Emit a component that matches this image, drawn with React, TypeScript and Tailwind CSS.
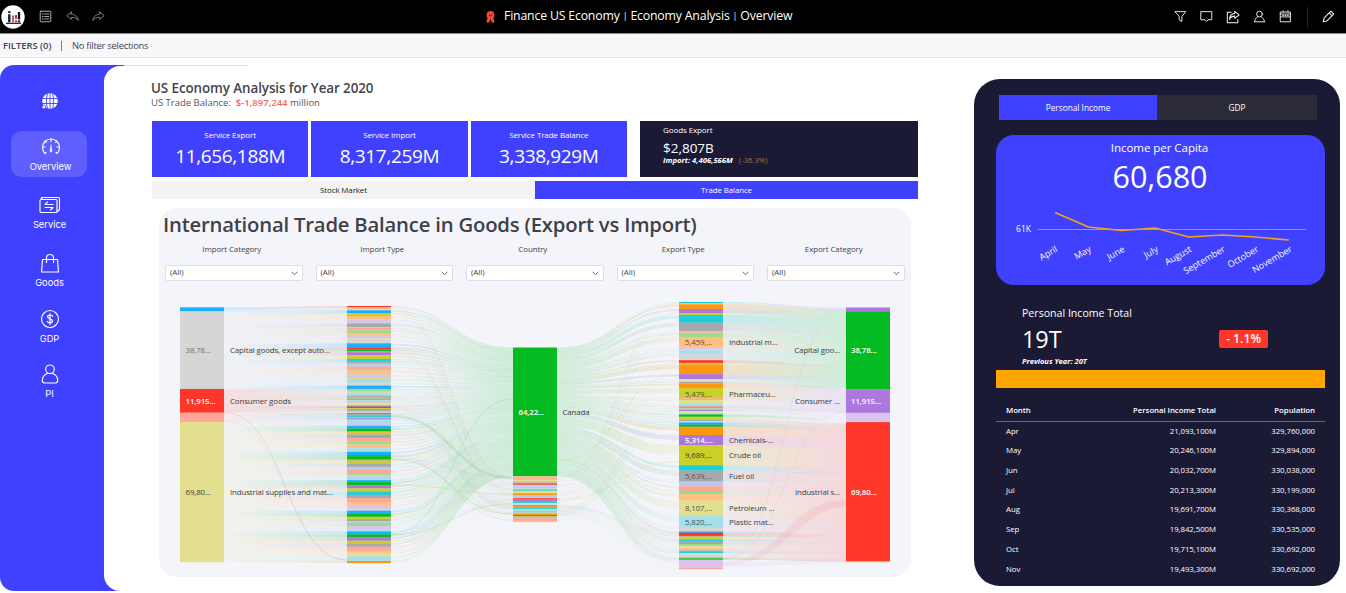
import React from 'react';

const C = {
  blue: '#1aaeff',
  gray: '#a8a8ab',
  silver: '#d6d6d6',
  red: '#ff372b',
  pink: '#ffa698',
  khaki: '#e2e08f',
  green: '#05bb22',
  purple: '#ad78dd',
  lavender: '#dac3ee',
  olive: '#cccf28',
  teal: '#1acfe0',
  orange: '#ff9610',
  peach: '#ffc080',
  sky: '#b4cdec',
  mint: '#96dd8c',
  aqua: '#a5e0ea',
};

type ColorName = keyof typeof C;
type Band = { y: number; h: number; color: ColorName };

// "color:weight" pairs, stacked between top and bottom
const parseBands = (top: number, bottom: number, spec: string): Band[] => {
  const parts = spec
    .trim()
    .split(/\s+/)
    .map((part) => part.split(':'));
  const sum = parts.reduce((acc, [, size]) => acc + Number(size), 0);
  let y = top;
  return parts.map(([color, size]) => {
    const h = (Number(size) / sum) * (bottom - top);
    const band = { y, h, color: color as ColorName };
    y += h;
    return band;
  });
};

const importCategory = parseBands(307.3, 562, 'blue:12 silver:233 red:71 pink:28 khaki:420');

const importType = parseBands(
  306,
  563,
  `red:4 peach:5 silver:4 blue:8 olive:9 peach:10 lavender:10 mint:4 gray:10 aqua:2 pink:7 mint:8 peach:8
  lavender:8 khaki:5 silver:10 blue:12 red:6 green:6 orange:3 purple:9 olive:11 teal:6 gray:8 sky:9 pink:9 mint:3
  peach:12 lavender:10 khaki:3 aqua:11 silver:9 blue:10 mint:7 peach:4 aqua:8 olive:4 purple:3 mint:3 gray:5 aqua:4
  pink:3 silver:5 khaki:4 blue:3 red:5 olive:3 purple:4 mint:5 silver:3 green:3 gray:5 teal:3 mint:4 purple:4
  aqua:10 lavender:9 blue:8 green:8 orange:4 olive:6 gray:11 pink:9 mint:10 peach:11 aqua:11 blue:10 red:3
  green:9 purple:4 olive:9 gray:10 sky:9 pink:12 mint:4 lavender:8 aqua:7 blue:6 green:10 purple:9 olive:9 teal:10
  gray:10 pink:12 peach:9 lavender:11 silver:6 blue:8 green:10 olive:7 gray:6 sky:5 mint:10 lavender:10 aqua:6
  blue:9 green:9 purple:10 olive:8 gray:10 pink:12 peach:6 khaki:11 aqua:14 orange:6`
);

const canada: Band = { y: 347.5, h: 128.8, color: 'green' };

const otherCountries = parseBands(
  476.3,
  522,
  `peach:6 pink:5 khaki:5 pink:4 gray:3 red:4 aqua:5 sky:5 silver:5 teal:4 khaki:8 orange:7 sky:5 peach:4
  red:4 purple:5 teal:6 khaki:5 aqua:3 red:3 orange:4 teal:4 aqua:6 mint:6 sky:3 orange:5 red:4 mint:6 pink:8 peach:4`
);

const exportType = parseBands(
  302,
  569,
  `teal:3 peach:4 orange:14 purple:12 olive:6 teal:23 gray:25 sky:4 pink:3 mint:11 peach:31 lavender:6 khaki:3 aqua:10
  silver:20 red:8 olive:5 orange:29 purple:15 silver:4 khaki:4 gray:5 orange:13 olive:32 pink:5 khaki:11 aqua:5
  pink:4 gray:5 mint:5 purple:3 khaki:5 aqua:5 green:7 olive:9 gray:4 silver:4 blue:7 green:6 orange:25 purple:31
  olive:60 teal:16 gray:33 sky:14 pink:14 mint:10 peach:19 khaki:47 aqua:35 silver:11 blue:4 red:7 green:4 pink:5
  olive:4 teal:5 gray:9 mint:6 khaki:6 peach:7 gray:4 teal:4 silver:12 olive:4 green:4 lavender:25 pink:3`
);

const exportCategory = parseBands(307.5, 562, 'purple:13 green:232 purple:71 lavender:28 red:418 olive:2');

const NODE = 44;
const COLS = { a: 180, b: 347, c: 513, d: 679, e: 846 };

const ribbon = (x0: number, y0: number, x1: number, y1: number) => {
  const m = (x0 + x1) / 2;
  return `M${x0} ${y0}C${m} ${y0} ${m} ${y1} ${x1} ${y1}`;
};

const bandAt = (bands: Band[], y: number) => bands.find((b) => y < b.y + b.h) ?? bands[bands.length - 1];

const Nodes = ({ x, bands }: { x: number; bands: Band[] }) => (
  <g>
    {bands.map((b, i) => (
      <rect key={i} x={x} y={b.y} width={NODE} height={b.h + 0.2} fill={C[b.color]} />
    ))}
  </g>
);

const Gradient = ({ id, x0, x1, from, to, a = 0.15, b = 0.15 }: {
  id: string; x0: number; x1: number; from: string; to: string; a?: number; b?: number;
}) => (
  <linearGradient id={id} gradientUnits="userSpaceOnUse" x1={x0} x2={x1} y1="0" y2="0">
    <stop offset="0" stopColor={from} stopOpacity={a} />
    <stop offset="1" stopColor={to} stopOpacity={b} />
  </linearGradient>
);

const names = Object.keys(C) as ColorName[];

const Links = () => (
  <g fill="none">
    {/* import category -> import type */}
    {importType.map((b, i) => {
      const y = b.y + b.h / 2;
      const y0 = 307.3 + ((y - 306) / 257) * 254.7;
      const from = bandAt(importCategory, y0);
      return (
        <g key={i} strokeWidth={b.h}>
          <path d={`${ribbon(224, y0, 347, y)}v.01`} stroke={`url(#ab-${from.color})`} />
          <path d={`${ribbon(224, y0, 347, y)}v.01`} stroke={`url(#bx-${b.color})`} />
        </g>
      );
    })}
    <path d={ribbon(224, 412.5, 347, 560)} stroke={C.red} strokeWidth="0.7" opacity="0.2" />
    <path d={ribbon(226, 421, 347, 560)} stroke={C.teal} strokeWidth="0.6" opacity="0.15" />
    {/* import type -> country */}
    {importType.map((b, i) => {
      const t = (b.y - 306 + b.h / 2) / 257;
      return (
        <g key={i}>
          <path
            d={ribbon(391, b.y + b.h * 0.3, 513, canada.y + t * canada.h)}
            strokeWidth={b.h * 0.55}
            stroke={`url(#bc-${b.color})`}
          />
          <path
            d={ribbon(391, b.y + b.h * 0.8, 513, 477 + ((t * 1.7) % 1) * 44)}
            strokeWidth={0.5}
            stroke={C[b.color]}
            opacity={0.12}
          />
        </g>
      );
    })}
    <path d={ribbon(391, 416, 513, 478)} stroke="#4fbf62" strokeWidth="2.5" opacity="0.17" />
    <path d={ribbon(391, 459, 513, 514)} stroke={C.green} opacity="0.18" />
    <path d={ribbon(391, 485, 513, 494)} stroke={C.olive} opacity="0.25" />
    <path d={ribbon(391, 534, 513, 399)} stroke={C.green} strokeWidth="0.7" opacity="0.2" />
    <path d={ribbon(391, 535, 513, 504)} stroke={C.green} opacity="0.14" />
    {/* country -> export type */}
    {exportType.map((b, i) => {
      const t = (b.y - 302 + b.h / 2) / 267;
      return (
        <g key={i}>
          <path
            d={ribbon(557, canada.y + t * canada.h, 679, b.y + b.h * 0.25)}
            strokeWidth={b.h * 0.48}
            stroke={`url(#cd-${b.color})`}
          />
          <path
            d={ribbon(557, 477 + ((t * 1.9) % 1) * 44, 679, b.y + b.h * 0.8)}
            strokeWidth={0.5}
            stroke={C[b.color]}
            opacity={0.12}
          />
        </g>
      );
    })}
    <path d={ribbon(557, 461, 679, 375)} stroke={C.olive} strokeWidth="0.8" opacity="0.25" />
    <path d={ribbon(557, 500, 679, 462)} stroke={C.olive} opacity="0.2" />
    {/* export type -> export category */}
    {exportType.slice(0, -2).map((b, i) => {
      const y = b.y + b.h / 2;
      const y1 = 307.5 + ((y - 302) / 257.7) * 254;
      const to = bandAt(exportCategory, y1);
      return (
        <g key={i} strokeWidth={b.h}>
          <path d={`${ribbon(723, y, 846, y1)}v.01`} stroke={`url(#de-${to.color})`} />
          <path d={`${ribbon(723, y, 846, y1)}v.01`} stroke={`url(#dx-${b.color})`} />
        </g>
      );
    })}
    <path
      d="M723 561C785 561 785 500 846 500V507C800 507 785 566 723 566z"
      fill="url(#dtail)"
    />
    <path d={ribbon(723, 565, 846, 561)} stroke={C.lavender} strokeWidth="4" opacity="0.16" />
    <path d={ribbon(723, 559, 846, 309)} stroke={C.gray} strokeWidth="0.6" opacity="0.25" />
    <path d={ribbon(723, 559, 846, 412)} stroke={C.gray} strokeWidth="0.6" opacity="0.25" />
  </g>
);

const sankeyLabels = [
  { x: 185.5, y: 353, text: '38,78...', fill: '#6d6d72' },
  { x: 185.5, y: 403.5, text: '11,915...', fill: '#ffffff', bold: true },
  { x: 185.5, y: 494.5, text: '69,80...', fill: '#3c3d42' },
  { x: 230, y: 353, text: 'Capital goods, except auto...' },
  { x: 230, y: 403.5, text: 'Consumer goods' },
  { x: 230, y: 494.5, text: 'Industrial supplies and mat...' },
  { x: 518.5, y: 415, text: '64,22...', fill: '#ffffff', bold: true },
  { x: 562.5, y: 415, text: 'Canada' },
  { x: 685, y: 345, text: '5,459,...', fill: '#55504a' },
  { x: 685, y: 396.5, text: '5,479,...', fill: '#55504a' },
  { x: 685, y: 443, text: '5,314,...', fill: '#ffffff', bold: true },
  { x: 685, y: 458, text: '9,689,...', fill: '#3c3d42' },
  { x: 685, y: 478.5, text: '5,639,...', fill: '#55555a' },
  { x: 685, y: 510.5, text: '8,107,...', fill: '#55504a' },
  { x: 685, y: 524.5, text: '5,820,...', fill: '#44505a' },
  { x: 729, y: 345, text: 'Industrial m...' },
  { x: 729, y: 396.5, text: 'Pharmaceu...' },
  { x: 729, y: 443, text: 'Chemicals-...' },
  { x: 729, y: 458, text: 'Crude oil' },
  { x: 729, y: 478.5, text: 'Fuel oil' },
  { x: 729, y: 510.5, text: 'Petroleum ...' },
  { x: 729, y: 524.5, text: 'Plastic mat...' },
  { x: 840, y: 353, text: 'Capital goo...', end: true },
  { x: 840, y: 403.5, text: 'Consumer ...', end: true },
  { x: 840, y: 494.5, text: 'Industrial s...', end: true },
  { x: 851, y: 353, text: '38,78...', fill: '#ffffff', bold: true },
  { x: 851, y: 403.5, text: '11,915...', fill: '#ffffff', bold: true },
  { x: 851, y: 494.5, text: '69,80...', fill: '#ffffff', bold: true },
];

const Sankey = () => (
  <svg className="block w-[752px] h-[282px]" viewBox="159 295 752 282">
    <defs>
      {names.map((n) => (
        <React.Fragment key={n}>
          <Gradient id={`ab-${n}`} x0={224} x1={347} from={C[n]} to={C[n]} a={0.13} b={0.03} />
          <Gradient id={`bx-${n}`} x0={224} x1={347} from={C[n]} to={C[n]} a={0} b={0.2} />
          <Gradient id={`bc-${n}`} x0={391} x1={513} from={C[n]} to={C.green} />
          <Gradient id={`cd-${n}`} x0={557} x1={679} from={C.green} to={C[n]} b={n === 'olive' ? 0.1 : 0.14} />
          <Gradient id={`de-${n}`} x0={723} x1={846} from={C[n]} to={C[n]} a={0.03} b={0.15} />
          <Gradient id={`dx-${n}`} x0={723} x1={846} from={C[n]} to={C[n]} a={0.2} b={0} />
        </React.Fragment>
      ))}
      <Gradient id="dtail" x0={723} x1={846} from={C.lavender} to={C.red} a={0.2} b={0.08} />
    </defs>
    <Links />
    <Nodes x={COLS.a} bands={importCategory} />
    <Nodes x={COLS.b} bands={importType} />
    <Nodes x={COLS.c} bands={[canada, ...otherCountries]} />
    <Nodes x={COLS.d} bands={exportType} />
    <Nodes x={COLS.e} bands={exportCategory} />
    {sankeyLabels.map((l, i) => (
      <text
        key={i}
        x={l.x}
        y={l.y}
        fontSize="7.9"
        letterSpacing="-0.12"
        fontWeight={l.bold ? 600 : 400}
        textAnchor={l.end ? 'end' : 'start'}
        fill={l.fill ?? '#3c3d43'}
      >
        {l.text}
      </text>
    ))}
  </svg>
);

const months = ['April', 'May', 'June', 'July', 'August', 'September', 'October', 'November'];
const incomeY = [212.5, 227, 230.5, 228, 237, 235, 237, 240];

const IncomeChart = () => (
  <svg className="block w-[329px] h-[85px]" viewBox="996 200 329 85">
    <text x="1031" y="232" fontSize="8.5" textAnchor="end" fill="#fff">61K</text>
    <line x1="1038" x2="1306" y1="229.5" y2="229.5" stroke="#8f8fff" />
    <polyline
      points={incomeY.map((y, i) => `${1055 + i * 33.4},${y}`).join(' ')}
      fill="none"
      stroke="#f5a21a"
      strokeWidth="1.7"
    />
    {months.map((m, i) => (
      <text
        key={m}
        fontSize="9"
        fill="#fff"
        textAnchor="end"
        transform={`translate(${1058.3 + i * 33.5} 251) rotate(-30)`}
      >
        {m}
      </text>
    ))}
  </svg>
);

const rows = [
  ['Apr', '21,093,100M', '329,760,000'],
  ['May', '20,246,100M', '329,894,000'],
  ['Jun', '20,032,700M', '330,038,000'],
  ['Jul', '20,213,300M', '330,199,000'],
  ['Aug', '19,691,700M', '330,368,000'],
  ['Sep', '19,842,500M', '330,535,000'],
  ['Oct', '19,715,100M', '330,692,000'],
  ['Nov', '19,493,300M', '330,692,000'],
];

const Icon = ({ className, viewBox = '0 0 16 16', children }: {
  className: string; viewBox?: string; children: React.ReactNode;
}) => (
  <svg className={className} viewBox={viewBox} fill="none" stroke="currentColor" strokeWidth="1.15" strokeLinejoin="round" strokeLinecap="round">
    {children}
  </svg>
);

const Header = () => (
  <header className="h-[33px] bg-black flex items-center text-white shrink-0">
    <div className="flex items-center w-[486px] pl-[1px]">
      <svg className="w-6 h-6" viewBox="0 0 24 24">
        <circle cx="12" cy="12" r="11.7" fill="#fff" />
        <path d="M5 18.300h15" stroke="#15152e" strokeWidth="1.2" />
        <path d="M8.300 6.200v1.800M8.300 9.200v8" stroke="#15152e" strokeWidth="2.4" />
        <path d="M12 10.500v6.700" stroke="#d43a35" strokeWidth="1.700" />
        <path d="M15 10v4M15 15.200v2" stroke="#8c2a3a" strokeWidth="1.700" />
        <path d="M18 7v7.500M18 15.500v1.700" stroke="#15152e" strokeWidth="2.4" />
      </svg>
      <Icon className="w-[13px] h-[13px] ml-[14px] text-[#b5b5bd]">
        <rect x="1.500" y="1.500" width="13" height="13" rx="1" />
        <path d="M4 5h1M7 5h5M4 8h1M7 8h5M4 11h1M7 11h5" />
      </Icon>
      <Icon className="w-[13px] h-[13px] ml-[14px] text-[#85858d]">
        <path d="M6.500 2.500 1 7l5.500 4.500V9c4 0 6.500 1 8.500 4-.5-5-4-7.500-8.500-8z" />
      </Icon>
      <Icon className="w-[13px] h-[13px] ml-[13px] text-[#85858d]">
        <path d="M9.500 2.500 15 7l-5.500 4.500V9c-4 0-6.500 1-8.500 4 .5-5 4-7.500 8.500-8z" />
      </Icon>
    </div>
    <div className="flex items-center w-[688px]">
      <div className="w-[18px]">
        <svg className="w-[9px] h-3" viewBox="0 0 9 12">
          <circle cx="4.500" cy="4" r="3.900" fill="#f44a35" />
          <path d="M1.500 7 .3 11.500H3L4.500 8 6 11.500h2.700L7.500 7z" fill="#f44a35" />
          <path d="M3 4l1.200 1.200L6.200 3" fill="none" stroke="#4a0d07" strokeWidth=".9" />
        </svg>
      </div>
      <h1 className="text-[12.3px] tracking-[-0.18px] whitespace-nowrap">
        Finance US Economy <span className="text-[9px] align-[1px]">|</span> Economy Analysis <span className="text-[9px] align-[1px]">|</span> Overview
      </h1>
    </div>
    <div className="flex items-center text-[#f2f2f6]">
      <Icon className="w-[13px] h-[13px]">
        <path d="M1.500 2h13L9.700 8v6L6.300 12V8z" />
      </Icon>
      <Icon className="w-[13px] h-[13px] ml-[13px]">
        <path d="M1.500 2h13v10H10l-2 2.200L6 12H1.500z" />
      </Icon>
      <Icon className="w-[14px] h-[14px] ml-[13px]">
        <path d="M6 2.500H1.500v12h12V11M10 1.500 15 5.500l-5 4V7C7 7 5.300 8 4 10.500 4.200 6.500 6.500 4.200 10 4z" />
      </Icon>
      <Icon className="w-[13px] h-[13px] ml-[13px]">
        <circle cx="8" cy="5" r="3.500" />
        <path d="M2 14.500c0-3 1.800-5 4-6.200M14 14.500c0-3-1.800-5-4-6.200M2 14.500h12" />
      </Icon>
      <Icon className="w-[13px] h-[13px] ml-[13px]">
        <path d="M2 2.500h12v12H2zM5 1v1.500M11 1v1.500M2 5h12M2 8.500h12M4.500 6.800h1M7.500 6.800h1M10.500 6.800h1" />
      </Icon>
      <div className="w-px h-5 bg-[#222228] ml-[15px]" />
      <Icon className="w-[13px] h-[13px] ml-[14px]">
        <path d="M11 1.500 14.500 5l-8.500 8.500L1.500 14.500 2.500 10zM9 3.500 12.500 7" strokeWidth="1.300" />
      </Icon>
    </div>
  </header>
);

const navItems = [
  {
    label: 'Overview',
    box: 'mt-[22px] h-[46px] pt-[6px]',
    icon: (
      <Icon className="w-5 h-5" viewBox="0 0 20 20">
        <path d="M4 16.500a8.500 8.500 0 1 1 12 0M4 16.500l1-1M16 16.500l-1-1M1.500 10H4M16 10h2.500M10 1.500v3M4 4l1.300 1.300M16 4l-1.300 1.300" />
        <path d="M10 8l1 6a1 1 0 0 1-2 0z" fill="currentColor" strokeWidth=".5" />
      </Icon>
    ),
  },
  {
    label: 'Service',
    box: 'mt-[16px] h-[43px] pt-[2px]',
    icon: (
      <Icon className="w-[21px] h-5" viewBox="0 0 21 20">
        <rect x="1" y="4.500" width="17" height="13" rx="1" />
        <path d="M2.500 2.500h17a1 1 0 0 1 1 1v11l-2 2M2 4l1.500-1.500M14 9.500H6L8.500 7M6 12.500h8L11.500 15" />
      </Icon>
    ),
  },
  {
    label: 'Goods',
    box: 'mt-[15px] h-[43px] pt-[2px]',
    icon: (
      <Icon className="w-5 h-5" viewBox="0 0 20 20">
        <path d="M2.500 6.500h15l1 12.500h-17zM6.500 9.500V5a3.500 3.500 0 0 1 7 0v4.500" />
      </Icon>
    ),
  },
  {
    label: 'GDP',
    box: 'mt-[13px] h-[43px] pt-[2px]',
    icon: (
      <Icon className="w-5 h-5" viewBox="0 0 20 20">
        <circle cx="10" cy="10" r="8.500" />
        <path d="M12.700 7.300C12 6 8 5.500 7.500 7.700c-.3 2.500 5.200 1.800 5 4.500-.2 2.300-4.200 2.300-5.200.3M10 4.800v10.400" strokeWidth="1.300" />
      </Icon>
    ),
  },
  {
    label: 'PI',
    box: 'mt-[12px] h-[43px] pt-[2px]',
    icon: (
      <Icon className="w-5 h-5" viewBox="0 0 20 20">
        <circle cx="10" cy="5.300" r="4.300" />
        <path d="M7.500 9.500c-3 1-5 3.500-5.200 6.500 0 2 .7 3 2.200 3h11c1.500 0 2.200-1 2.200-3-.2-3-2.200-5.500-5.200-6.500" />
      </Icon>
    ),
  },
];

const Sidebar = () => (
  <aside className="w-[124px] h-[526px] mt-[7px] bg-[#4040ff] rounded-l-[14px] shrink-0 flex flex-col text-white">
    <div className="w-[99px] flex flex-col items-center pt-[28px]">
      <svg className="w-4 h-4" viewBox="0 0 16 16">
        <circle cx="8" cy="8" r="7.800" fill="#fff" />
        <path d="M0 5.500h16M0 10.500h16M8 0v16M5.500.5C4 5 4 11 5.500 15.500M10.500.5C12 5 12 11 10.500 15.500" fill="none" stroke="#4040ff" strokeWidth=".9" />
        <circle cx="1.800" cy="14" r="1.800" fill="#fff" stroke="#4040ff" strokeWidth=".7" />
      </svg>
      {navItems.map((item) => (
        <div
          key={item.label}
          className={`w-[76px] flex flex-col items-center rounded-[11px] ${item.box} ${
            item.label === 'Overview' ? 'bg-[#5f5fff] pl-[3px] mr-px' : ''
          }`}
        >
          {item.icon}
          <span className="text-[9.3px] leading-3 mt-[4px] font-['Inter','Liberation_Sans',sans-serif]">{item.label}</span>
        </div>
      ))}
    </div>
  </aside>
);

const stats = [
  { label: 'Service Export', value: '11,656,188M' },
  { label: 'Service Import', value: '8,317,259M' },
  { label: 'Service Trade Balance', value: '3,338,929M' },
];

const filters = ['Import Category', 'Import Type', 'Country', 'Export Type', 'Export Category'];

const Overview = () => (
  <main className="-ml-[20px] pl-[47px] mt-[8px] h-[525px] w-[814px] shrink-0 bg-white rounded-l-[16px]">
    <div className="-mt-px -ml-[27px] w-[124px] h-px bg-[#dcdcff]" />
    <h2 className="text-[13.400px] leading-[18px] tracking-[-0.08px] font-semibold text-[#44454c] pt-[13px]">US Economy Analysis for Year 2020</h2>
    <p className="text-[9.500px] leading-[11px] text-[#55565c]">
      US Trade Balance:&nbsp; <span className="text-[#f0695c] font-semibold">$-1,897,244</span> million
    </p>
    <div className="flex mt-[13px] ml-px h-[56px] text-white">
      <div className="flex gap-[3px] w-[475px]">
        {stats.map((s) => (
          <div key={s.label} className="flex-1 bg-[#4040ff] flex flex-col items-center">
            <div className="text-[8px] leading-[12px] mt-[8px] tracking-[-0.1px]">{s.label}</div>
            <div className="text-[19px] leading-[26px] mt-[2px] tracking-[-0.35px]">{s.value}</div>
          </div>
        ))}
      </div>
      <div className="ml-[13px] w-[278px] bg-[#1b1a35] pl-[23px]">
        <div className="text-[8px] leading-[12px] mt-[3px] tracking-[-0.1px]">Goods Export</div>
        <div className="text-[13.500px] leading-[14px] mt-[5px]">$2,807B</div>
        <div className="text-[7.700px] leading-[8px] mt-px">
          <span className="italic font-bold">Import: 4,406,566M</span>
          <span className="ml-[6px] text-[#a8743f]">(<span className="text-[#ff372b]">-</span>36.3%)</span>
        </div>
      </div>
    </div>
    <div className="flex mt-[4px] ml-px h-[18px] text-[7.900px] tracking-[-0.1px] text-center leading-[18px] w-[766px]">
      <div className="flex-1 bg-[#f3f3f3] text-[#222]">Stock Market</div>
      <div className="flex-1 bg-[#4040ff] text-white">Trade Balance</div>
    </div>
    <section className="mt-[9px] ml-[8px] w-[752px] h-[369px] bg-[#f4f5fb] rounded-[18px] overflow-hidden text-[#404148]">
      <h3 className="pl-[4px] pt-[2px] text-[20.300px] leading-[28px] tracking-[-0.2px] font-semibold whitespace-nowrap">
        International Trade Balance in Goods (Export vs Import)
      </h3>
      <div className="flex gap-[13px] pl-[6px] mt-[5px] h-[52px]">
        {filters.map((f) => (
          <div key={f} className="w-[137.500px]">
            <div className="text-[7.900px] leading-[12px] tracking-[-0.08px] text-center pr-[4px]">{f}</div>
            <div className="mt-[10px] h-4 bg-white border border-[#dedfe4] rounded-[2px] flex items-center justify-between px-[4px]">
              <span className="text-[7.900px] leading-none">(All)</span>
              <svg className="w-[7px] h-[5px]" viewBox="0 0 7 5" fill="none" stroke="#66676d">
                <path d="M.5.7l3 3 3-3" />
              </svg>
            </div>
          </div>
        ))}
      </div>
      <Sankey />
    </section>
  </main>
);

const IncomePanel = () => (
  <section className="w-[366px] h-[507px] ml-[56px] mt-[21px] shrink-0 bg-[#1b1a35] rounded-[26px] pt-[16px] pl-[22px] text-white">
    <div className="ml-[3px] w-[318px] h-[25px] flex text-[8.300px] leading-[25px] text-center">
      <div className="w-[158px] bg-[#4040ff]">Personal Income</div>
      <div className="flex-1 bg-[#2c2b38]">GDP</div>
    </div>
    <div className="mt-[15px] w-[329px] h-[150px] bg-[#4040ff] rounded-[18px] flex flex-col items-center">
      <div className="text-[11.600px] leading-[16px] mt-[5px] pr-[2px] tracking-[-0.08px]">Income per Capita</div>
      <div className="text-[30.500px] leading-[40px] mb-[4px] pr-px">60,680</div>
      <IncomeChart />
    </div>
    <div className="flex w-[329px] pl-[26px] mt-[20px]">
      <div className="w-[197px]">
        <div className="text-[10.600px] leading-[16px]">Personal Income Total</div>
        <div className="text-[23.500px] leading-[30px] mt-[3px] tracking-[-0.1px]">19T</div>
        <div className="text-[7.500px] leading-[11px] mt-[2px] italic font-bold">Previous Year: 20T</div>
      </div>
      <div className="mt-[25px] w-[49px] h-[18px] bg-[#ff372b] rounded-[2px] text-[12.300px] leading-[18px] font-semibold text-center">- 1.1%</div>
    </div>
    <div className="mt-[3px] w-[329px] h-[18px] bg-[#ffa500]" />
    <table className="w-[329px] mt-[11px] text-[7.800px] leading-[19px] tracking-[-0.04px]">
      <thead>
        <tr className="border-b border-[#65657b] font-semibold">
          <td className="pl-[10px] pt-[2px] h-[22px] w-[70px]">Month</td>
          <td className="text-right pt-[2px] w-[150px]">Personal Income Total</td>
          <td className="text-right pt-[2px] pr-[10px]">Population</td>
        </tr>
      </thead>
      <tbody>
        {rows.map(([month, income, population]) => (
          <tr key={month} className="h-[19.750px] font-medium">
            <td className="pl-[10px]">{month}</td>
            <td className="text-right">{income}</td>
            <td className="text-right pr-[10px]">{population}</td>
          </tr>
        ))}
      </tbody>
    </table>
  </section>
);

const App: React.FC = () => {
  return (
    <div className="w-[1346px] h-[593px] overflow-hidden bg-white flex flex-col font-['Open_Sans','Noto_Sans',sans-serif]">
      <Header />
      <div className="h-[25px] shrink-0 bg-[#f8f8fa] border-t border-t-[#8a8a8a] border-b border-b-[#e6e7eb] flex items-center pl-[3px] pt-px text-[9.400px] text-[#3f4450]">
        <span className="font-semibold">FILTERS (0)</span>
        <span className="w-px h-[10px] bg-[#3f8fc0] mx-[9.800px]" />
        <span className="tracking-[-0.25px]">No filter selections</span>
      </div>
      <div className="flex items-start">
        <Sidebar />
        <Overview />
        <IncomePanel />
      </div>
    </div>
  );
};

export default App;
